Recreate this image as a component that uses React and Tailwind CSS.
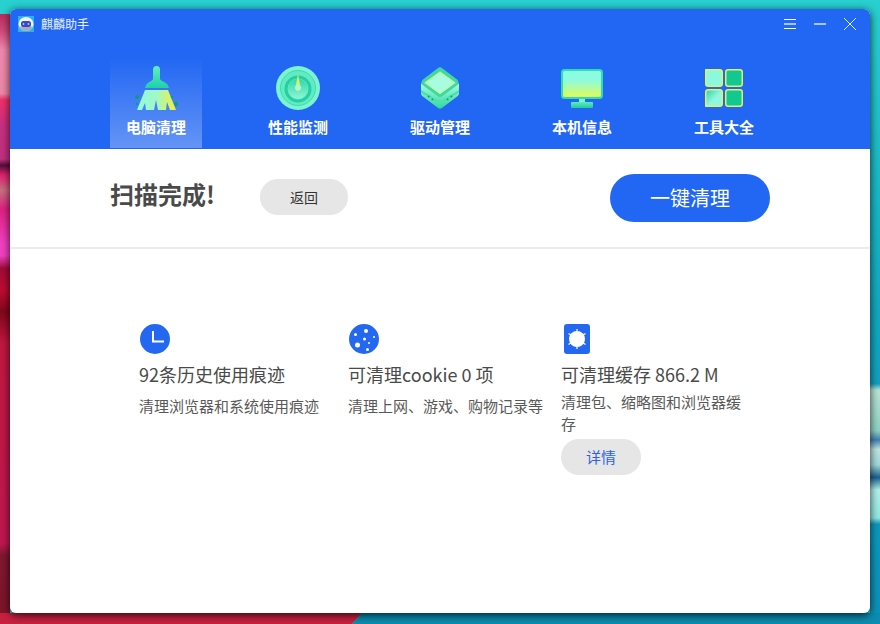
import React from 'react';

const cjk = { fontFamily: '"Noto Sans CJK SC", "Noto Sans", sans-serif' };

function Wallpaper() {
  return (
    <svg className="absolute inset-0" width="880" height="624" viewBox="0 0 880 624">
      <defs>
        <linearGradient id="wpLeft" gradientUnits="userSpaceOnUse" x1="0" y1="0" x2="0" y2="624">
          <stop offset="0.02" stopColor="#b82860" />
          <stop offset="0.05" stopColor="#d04a7a" />
          <stop offset="0.08" stopColor="#f088b0" />
          <stop offset="0.15" stopColor="#ec88a8" />
          <stop offset="0.16" stopColor="#f03068" />
          <stop offset="0.2" stopColor="#c83080" />
          <stop offset="0.255" stopColor="#c03080" />
          <stop offset="0.265" stopColor="#501038" />
          <stop offset="0.28" stopColor="#e02070" />
          <stop offset="0.305" stopColor="#c87080" />
          <stop offset="0.335" stopColor="#e02080" />
          <stop offset="0.39" stopColor="#f040c0" />
          <stop offset="0.41" stopColor="#f040c0" />
          <stop offset="0.43" stopColor="#a00c38" />
          <stop offset="0.465" stopColor="#c00c30" />
          <stop offset="0.5" stopColor="#80081c" />
          <stop offset="0.55" stopColor="#c01840" />
          <stop offset="0.87" stopColor="#c01850" />
          <stop offset="0.89" stopColor="#801830" />
          <stop offset="1" stopColor="#7c1428" />
        </linearGradient>
        <linearGradient id="wpRight" gradientUnits="userSpaceOnUse" x1="0" y1="0" x2="0" y2="624">
          <stop offset="0" stopColor="#28d0d0" />
          <stop offset="0.5" stopColor="#12a8c0" />
          <stop offset="0.615" stopColor="#12a0c0" />
          <stop offset="0.625" stopColor="#b8e4d4" />
          <stop offset="0.69" stopColor="#90d0c4" />
          <stop offset="0.705" stopColor="#4080b0" />
          <stop offset="0.72" stopColor="#c0e4e0" />
          <stop offset="0.745" stopColor="#a0d8d8" />
          <stop offset="0.765" stopColor="#1a6090" />
          <stop offset="0.785" stopColor="#b0f0e8" />
          <stop offset="0.83" stopColor="#90e8e0" />
          <stop offset="0.84" stopColor="#0c98bc" />
          <stop offset="1" stopColor="#0c90b8" />
        </linearGradient>
      </defs>
      <rect width="880" height="624" fill="#28d0d0" />
      <rect x="0" y="14" width="10" height="610" fill="url(#wpLeft)" />
      <rect x="870" y="0" width="10" height="624" fill="url(#wpRight)" />
      <polygon points="0,613 362,613 352,624 0,624" fill="#c8203f" />
      <polygon points="362,613 880,613 880,624 352,624" fill="#0c8cb0" />
    </svg>
  );
}

function LogoIcon() {
  return (
    <svg width="16" height="16" viewBox="0 0 16 16">
      <rect width="16" height="16" fill="#27b4f0" />
      <ellipse cx="8" cy="8" rx="7.500" ry="7" fill="#f0f2f6" />
      <path d="M1 10.500h14c-1 3-4 4.500-7 4.500s-6-1.500-7-4.500z" fill="#a8acb8" />
      <rect x="3" y="5" width="10" height="6" rx="2.500" fill="#3848c8" />
      <circle cx="5.500" cy="8" r="0.900" fill="#9ad8ff" />
      <circle cx="10.500" cy="8" r="0.900" fill="#9ad8ff" />
    </svg>
  );
}

function BroomIcon() {
  return (
    <svg width="44" height="44" viewBox="0 0 44 44">
      <defs>
        <linearGradient id="broomTop" x1="0" y1="0" x2="0" y2="1">
          <stop offset="0" stopColor="#5ff0c0" />
          <stop offset="1" stopColor="#20d0a8" />
        </linearGradient>
        <linearGradient id="broomBottom" x1="0" y1="0" x2="1" y2="0">
          <stop offset="0" stopColor="#90fbe0" />
          <stop offset="0.5" stopColor="#a0f8c8" />
          <stop offset="1" stopColor="#f4f030" />
        </linearGradient>
      </defs>
      <path d="M19 3.500a3.500 3.500 0 0 1 7 0V13c0 2 8 3 9 9H11c1-6 8-7 8-9z" fill="url(#broomTop)" />
      <path d="M11 24h23l8 20h-6l-3-8-1 8h-8l-2-10-2 10h-8l-1-7-3 7H3z" fill="url(#broomBottom)" />
      <circle cx="3" cy="31" r="2" fill="#05a070" />
      <circle cx="3" cy="38" r="1.200" fill="#05a070" />
      <circle cx="38" cy="31" r="1.200" fill="#05a070" />
      <circle cx="42" cy="38" r="2" fill="#05a070" />
    </svg>
  );
}

function GaugeIcon() {
  return (
    <svg width="44" height="44" viewBox="0 0 44 44">
      <defs>
        <linearGradient id="gaugeInner" x1="0" y1="0" x2="0" y2="1">
          <stop offset="0" stopColor="#2fd8a8" />
          <stop offset="1" stopColor="#8ff5d8" />
        </linearGradient>
      </defs>
      <circle cx="22" cy="22" r="22" fill="#7af5cf" />
      <circle cx="22" cy="22" r="17.500" fill="#62eac4" stroke="#3edcae" strokeWidth="1" />
      <circle cx="22" cy="23" r="12" fill="none" stroke="#24d0a0" strokeWidth="3" />
      <circle cx="22" cy="23" r="10" fill="url(#gaugeInner)" />
      <path d="M22 8l2.500 13a2.800 2.800 0 1 1-5 0z" fill="#d8f060" />
      <circle cx="22" cy="21.500" r="2.800" fill="#a8f8e0" />
    </svg>
  );
}

function ChipIcon() {
  return (
    <svg width="38" height="42" viewBox="0 0 40 44">
      <defs>
        <linearGradient id="chipSide" x1="0" y1="0" x2="0" y2="1">
          <stop offset="0" stopColor="#a8fce0" />
          <stop offset="1" stopColor="#2fd8a0" />
        </linearGradient>
      </defs>
      <path d="M0 28v-11l20 12 20-12v11c0 1-1 2-2 3L22 43c-1 1-3 1-4 0L2 31c-1-1-2-2-2-3z" fill="url(#chipSide)" />
      <path d="M0 24l20 12 20-12v3L20 39 0 27z" fill="#50e0b0" />
      <path d="M18 1c1-1 3-1 4 0l16 12c2 2 2 5 0 6L22 31c-1 1-3 1-4 0L2 19c-2-1-2-4 0-6z" fill="#3cd8a8" />
      <path d="M20 5l16 11.500L20 28 4 16.500z" fill="#a8fce0" stroke="#e4f060" strokeWidth="1" />
      <g fill="#0c9870">
        <circle cx="8" cy="31" r="1" />
        <circle cx="12" cy="34" r="1" />
        <circle cx="28" cy="34" r="1" />
        <circle cx="32" cy="31" r="1" />
      </g>
    </svg>
  );
}

function MonitorIcon() {
  return (
    <svg width="42" height="40" viewBox="0 0 42 40">
      <defs>
        <linearGradient id="screen" x1="0" y1="0" x2="0" y2="1">
          <stop offset="0" stopColor="#8cfbe0" />
          <stop offset="0.35" stopColor="#8cfbe0" />
          <stop offset="1" stopColor="#e4fc50" />
        </linearGradient>
        <linearGradient id="stand" x1="0" y1="0" x2="0" y2="1">
          <stop offset="0" stopColor="#5cecc0" />
          <stop offset="1" stopColor="#24c8a0" />
        </linearGradient>
      </defs>
      <rect x="1" y="1" width="40" height="28" rx="2.500" fill="url(#screen)" stroke="#2edcb0" strokeWidth="2" />
      <rect x="18" y="30" width="6" height="4" fill="#7cf4d0" />
      <rect x="10" y="33" width="22" height="6" rx="1" fill="url(#stand)" />
    </svg>
  );
}

function GridIcon() {
  return (
    <svg width="38" height="38" viewBox="0 0 38 38">
      <defs>
        <linearGradient id="cell" x1="0" y1="0" x2="1" y2="1">
          <stop offset="0" stopColor="#30d0a8" />
          <stop offset="0.55" stopColor="#90f8e0" />
        </linearGradient>
      </defs>
      <rect x="0" y="0" width="9" height="9" fill="#8cf8e0" />
      <rect x="0" y="29" width="9" height="9" fill="#8cf8e0" />
      <rect x="0.750" y="0.750" width="16.500" height="16.500" rx="2.500" fill="#8cf8e0" stroke="#e4f060" strokeWidth="1.500" />
      <rect x="20.750" y="0.750" width="16.500" height="16.500" rx="2.500" fill="#10c890" stroke="#e4f060" strokeWidth="1.500" />
      <rect x="0.750" y="20.750" width="16.500" height="16.500" rx="2.500" fill="url(#cell)" stroke="#e4f060" strokeWidth="1.500" />
      <rect x="20.750" y="20.750" width="16.500" height="16.500" rx="2.500" fill="#10c890" stroke="#e4f060" strokeWidth="1.500" />
    </svg>
  );
}

function ClockIcon() {
  return (
    <svg width="30" height="30" viewBox="0 0 30 30">
      <circle cx="15" cy="15" r="15" fill="#2468f2" />
      <path d="M13 7v10.500h11" fill="none" stroke="#fff" strokeWidth="2" />
    </svg>
  );
}

function CookieIcon() {
  return (
    <svg width="30" height="30" viewBox="0 0 30 30">
      <circle cx="15" cy="15" r="15" fill="#2468f2" />
      <g fill="#fff">
        <circle cx="17" cy="7" r="2" />
        <circle cx="6.500" cy="10.500" r="1.500" />
        <circle cx="15.500" cy="15" r="1.500" />
        <circle cx="25" cy="13" r="1" />
        <circle cx="20" cy="19" r="1" />
        <circle cx="8.500" cy="21" r="2.500" />
        <circle cx="18.500" cy="25.500" r="1.500" />
      </g>
    </svg>
  );
}

function CacheIcon() {
  return (
    <svg width="26" height="30" viewBox="0 0 26 30">
      <rect width="26" height="30" rx="3" fill="#2468f2" />
      <circle cx="13" cy="15" r="8" fill="#fff" />
      <g stroke="#fff" strokeWidth="1.200">
        <path d="M13 5v3M13 22v3M4.500 9.500l3 2M21.500 9.500l-3 2M4.500 20.500l3-2M21.500 20.500l-3-2" />
      </g>
    </svg>
  );
}

const tabs = [
  { name: '电脑清理', icon: BroomIcon, pad: 'pt-[8px]', active: true },
  { name: '性能监测', icon: GaugeIcon, pad: 'pt-[8px]' },
  { name: '驱动管理', icon: ChipIcon, pad: 'pt-[9px]' },
  { name: '本机信息', icon: MonitorIcon, pad: 'pt-[11px]' },
  { name: '工具大全', icon: GridIcon, pad: 'pt-[11px]' },
];

const items = [
  { icon: ClockIcon, title: '92条历史使用痕迹', desc: '清理浏览器和系统使用痕迹', width: 'w-[209px]', descGap: 'mt-[7px]' },
  { icon: CookieIcon, title: '可清理cookie 0 项', desc: '清理上网、游戏、购物记录等', width: 'w-[213px]', descGap: 'mt-[7px]' },
  { icon: CacheIcon, title: '可清理缓存 866.2 M', desc: '清理包、缩略图和浏览器缓存', width: 'w-[182px]', descGap: 'mt-[3px]', details: true },
];

export default function App() {
  return (
    <div className="relative w-[880px] h-[624px] overflow-hidden pl-[10px] pt-[9px]" style={cjk}>
      <Wallpaper />
      <div className="relative w-[860px] h-[604px] bg-white rounded-[6px] overflow-hidden shadow-[0_2px_8px_rgba(0,0,0,0.8)] flex flex-col">
        <div className="h-[140px] bg-[#2267f3] flex flex-col shrink-0">
          <div className="h-[30px] flex items-center pl-[8px] pr-[14px] shrink-0">
            <LogoIcon />
            <span className="ml-[7px] text-[12px] text-white/90">麒麟助手</span>
            <div className="ml-auto flex items-center gap-[18px] text-white">
              <svg width="12" height="12" viewBox="0 0 12 12">
                <path d="M0 1.500h12M0 10.500h12" stroke="#fff" strokeWidth="1" />
                <path d="M0 6h12" stroke="#a8c4fa" strokeWidth="2" />
              </svg>
              <svg width="12" height="12" viewBox="0 0 12 12">
                <path d="M0 6h12" stroke="#a8c4fa" strokeWidth="2" />
              </svg>
              <svg width="12" height="12" viewBox="0 0 12 12">
                <path d="M0 0l12 12M12 0L0 12" stroke="#dce8ff" strokeWidth="1" />
              </svg>
            </div>
          </div>
          <div className="flex gap-[50px] pl-[100px] pt-[19px]">
            {tabs.map((tab) => (
              <div
                key={tab.name}
                className={`w-[92px] h-[90px] flex flex-col items-center ${tab.active ? 'bg-gradient-to-b from-white/0 to-white/30' : ''}`}
              >
                <div className={`h-[58px] flex justify-center ${tab.pad}`}>
                  <tab.icon />
                </div>
                <span className="text-[15px] leading-[22px] font-bold text-white">{tab.name}</span>
              </div>
            ))}
          </div>
        </div>

        <div className="h-[100px] border-b-2 border-[#ececec] flex items-center pl-[100px] shrink-0">
          <span className="text-[24px] leading-[32px] font-bold text-[#4a4a4a] mb-[8px] w-[150px]">扫描完成!</span>
          <button className="w-[88px] h-[36px] mb-[2px] rounded-full bg-[#e6e6e6] text-[14px] text-[#333]">返回</button>
          <button className="ml-[262px] w-[160px] h-[48px] rounded-full bg-[#2267f3] text-[20px] text-white">一键清理</button>
        </div>

        <div className="flex pl-[129px] pt-[75px]">
          {items.map((item) => (
            <div key={item.title} className={`${item.width} flex flex-col items-start`}>
              <div className={item.details ? 'pl-[3px]' : 'pl-px'}>
                <item.icon />
              </div>
              <div className="mt-[6px] text-[18px] leading-[28px] text-[#4a4a4a]">{item.title}</div>
              <div className={`${item.descGap} text-[15px] leading-[22px] text-[#595959]`}>{item.desc}</div>
              {item.details && (
                <button className="mt-[4px] w-[80px] h-[36px] rounded-full bg-[#e6e6e6] text-[15px] text-[#2f62e0]">详情</button>
              )}
            </div>
          ))}
        </div>
      </div>
    </div>
  );
}
